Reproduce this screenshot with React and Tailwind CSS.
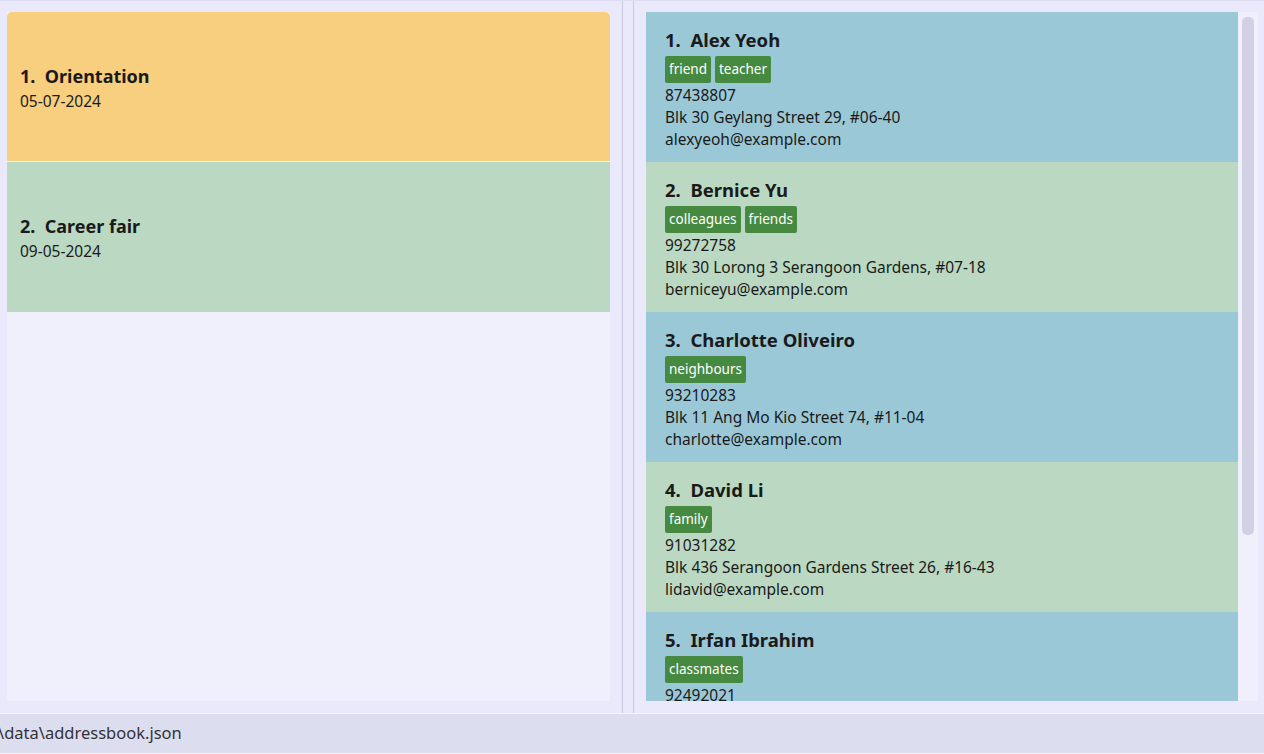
import React from "react";

const events = [
  { id: 1, title: "Orientation", date: "05-07-2024", color: "bg-[#f8cf7e]" },
  { id: 2, title: "Career fair", date: "09-05-2024", color: "bg-[#bad8c2]" },
];

const persons = [
  {
    name: "Alex Yeoh",
    tags: ["friend", "teacher"],
    phone: "87438807",
    address: "Blk 30 Geylang Street 29, #06-40",
    email: "alexyeoh@example.com",
  },
  {
    name: "Bernice Yu",
    tags: ["colleagues", "friends"],
    phone: "99272758",
    address: "Blk 30 Lorong 3 Serangoon Gardens, #07-18",
    email: "berniceyu@example.com",
  },
  {
    name: "Charlotte Oliveiro",
    tags: ["neighbours"],
    phone: "93210283",
    address: "Blk 11 Ang Mo Kio Street 74, #11-04",
    email: "charlotte@example.com",
  },
  {
    name: "David Li",
    tags: ["family"],
    phone: "91031282",
    address: "Blk 436 Serangoon Gardens Street 26, #16-43",
    email: "lidavid@example.com",
  },
  {
    name: "Irfan Ibrahim",
    tags: ["classmates"],
    phone: "92492021",
    address: "Blk 47 Tampines Street 20, #17-35",
    email: "irfan@example.com",
  },
];

function EventCard({ event, index }) {
  return (
    <div
      className={`${event.color} h-[150px] shrink-0 flex flex-col justify-center px-[13px] pt-[2px] ${
        index === 0 ? "rounded-t-[5px] border-b border-[#f3f3fc]" : ""
      }`}
    >
      <div className="text-[18px] font-bold leading-[24px] text-[#1a1a1a]">
        {event.id}.&nbsp;&nbsp;{event.title}
      </div>
      <div className="mt-[2px] text-[15.5px] leading-[22px] text-[#1a1a1a]">{event.date}</div>
    </div>
  );
}

function PersonCard({ person, index }) {
  const bg = index % 2 === 0 ? "bg-[#9ac8d7]" : "bg-[#bad8c2]";
  return (
    <div className={`${bg} h-[150px] shrink-0 px-[19px] pt-[16px]`}>
      <div className="text-[18.5px] font-bold leading-[24px] text-[#1a1a1a]">
        {index + 1}.&nbsp;&nbsp;{person.name}
      </div>
      <div className="flex gap-[4px] h-[28px] mt-[4px]">
        {person.tags.map((t) => (
          <span
            key={t}
            className="bg-[#468a41] text-white text-[13.5px] leading-[27px] h-[27px] px-[4px] rounded-[2px]"
          >
            {t}
          </span>
        ))}
      </div>
      <div className="text-[15.5px] leading-[22px] text-[#1a1a1a]">{person.phone}</div>
      <div className="text-[15.5px] leading-[22px] text-[#1a1a1a]">{person.address}</div>
      <div className="text-[15.5px] leading-[22px] text-[#1a1a1a]">{person.email}</div>
    </div>
  );
}

export default function App() {
  return (
    <div
      className="w-[1264px] h-[754px] flex flex-col bg-[#e9e9fb] overflow-hidden"
      style={{ fontFamily: '"Noto Sans", "Open Sans", sans-serif' }}
    >
      {/* main split */}
      <div className="flex h-[713px] border-t border-[#dcdcf0]">
        {/* events list */}
        <div className="w-[622px] pl-[7px] pr-[12px] pt-[11px] pb-[12px]">
          <div className="h-full bg-[#f0f0fc] flex flex-col overflow-hidden">
            {events.map((e, i) => (
              <EventCard key={e.id} event={e} index={i} />
            ))}
          </div>
        </div>

        {/* divider */}
        <div className="w-[12px] border-x border-[#c8c8dc]"></div>

        {/* persons list */}
        <div className="flex-1 pl-[12px] pr-[6px] pt-[11px] pb-[12px]">
          <div className="h-full bg-[#f0f0fc] flex overflow-hidden">
            <div className="flex-1 flex flex-col overflow-hidden">
              {persons.map((p, i) => (
                <PersonCard key={p.name} person={p} index={i} />
              ))}
            </div>
            <div className="w-[20px] pl-[4px] pr-[4px] pt-[5px]">
              <div className="h-[518px] bg-[#d0d2e4] rounded-[5px]"></div>
            </div>
          </div>
        </div>
      </div>

      {/* status bar */}
      <div className="h-[41px] border-t border-[#f4f4fd] border-b bg-[#dcdef0] flex items-center">
        <span className="text-[16.5px] text-[#333333] -ml-[2px]">\data\addressbook.json</span>
      </div>
    </div>
  );
}
